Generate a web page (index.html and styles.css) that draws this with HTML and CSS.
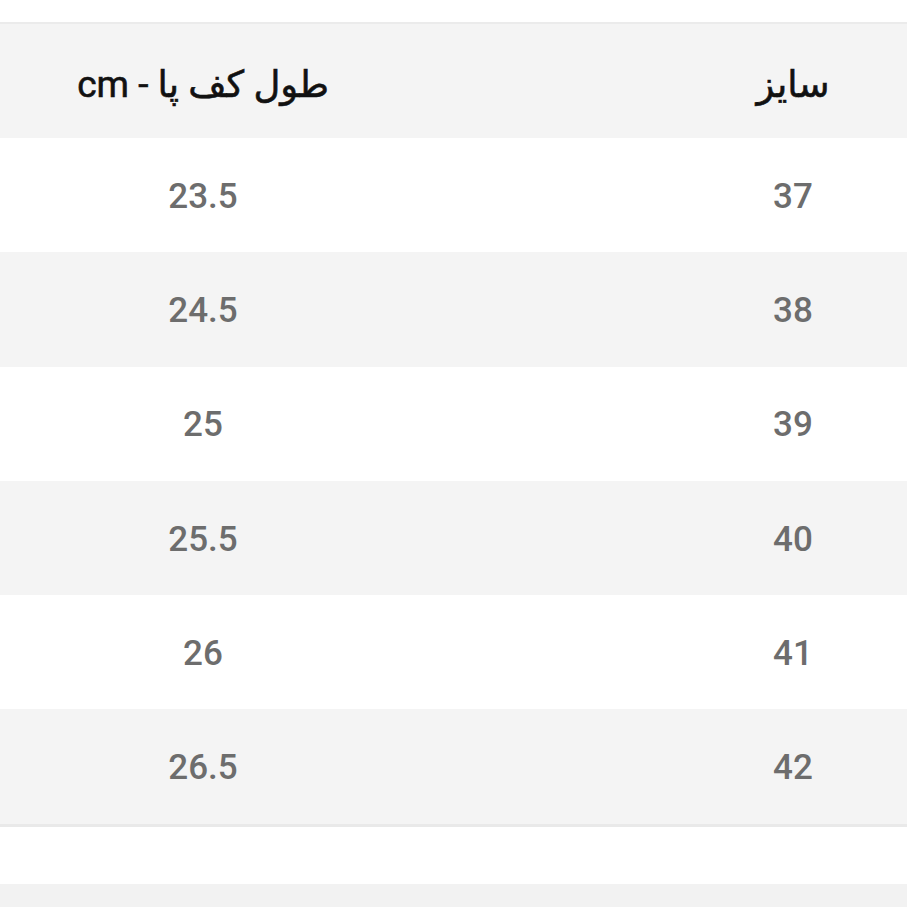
FILE: index.html
```html
<!DOCTYPE html>
<html lang="fa" dir="rtl">
<head>
<meta charset="utf-8">
<link rel="stylesheet" href="styles.css">
</head>
<body>
<div class="page">
  <div class="size-table">
    <div class="row head">
      <div class="cell c1">سایز</div>
      <div class="cell c2"></div>
      <div class="cell c3">طول کف پا - cm</div>
    </div>
    <div class="row"><div class="cell c1">37</div><div class="cell c2"></div><div class="cell c3">23.5</div></div>
    <div class="row alt"><div class="cell c1">38</div><div class="cell c2"></div><div class="cell c3">24.5</div></div>
    <div class="row"><div class="cell c1">39</div><div class="cell c2"></div><div class="cell c3">25</div></div>
    <div class="row alt"><div class="cell c1">40</div><div class="cell c2"></div><div class="cell c3">25.5</div></div>
    <div class="row"><div class="cell c1">41</div><div class="cell c2"></div><div class="cell c3">26</div></div>
    <div class="row alt"><div class="cell c1">42</div><div class="cell c2"></div><div class="cell c3">26.5</div></div>
  </div>
  <div class="spacer"></div>
  <div class="next"></div>
</div>
</body>
</html>
```
FILE: styles.css
```css
html, body {
  margin: 0;
  padding: 0;
  background: #ffffff;
}
.page {
  width: 907px;
  height: 907px;
  overflow: hidden;
  padding-top: 22px;
  box-sizing: border-box;
  font-family: Roboto, "DejaVu Sans", sans-serif;
}
.size-table {
  border-top: 2px solid #ebebeb;
  border-bottom: 3px solid #e9e9e9;
}
.row {
  display: grid;
  grid-template-columns: 228px 1fr 406px;
  height: 114.3px;
  align-items: center;
  background: #ffffff;
}
.row.alt, .row.head {
  background: #f4f4f4;
}
.row.head {
  height: 114px;
}
.cell {
  text-align: center;
  font-size: 35px;
  font-weight: 500;
  color: #6d6d6d;
  padding-top: 2px;
}
.head .cell {
  color: #111111;
  font-size: 37px;
  font-weight: 400;
  -webkit-text-stroke: 0.6px #111111;
  padding-top: 6px;
}
.spacer {
  height: 57px;
}
.next {
  height: 40px;
  background: #f2f2f2;
}
```
